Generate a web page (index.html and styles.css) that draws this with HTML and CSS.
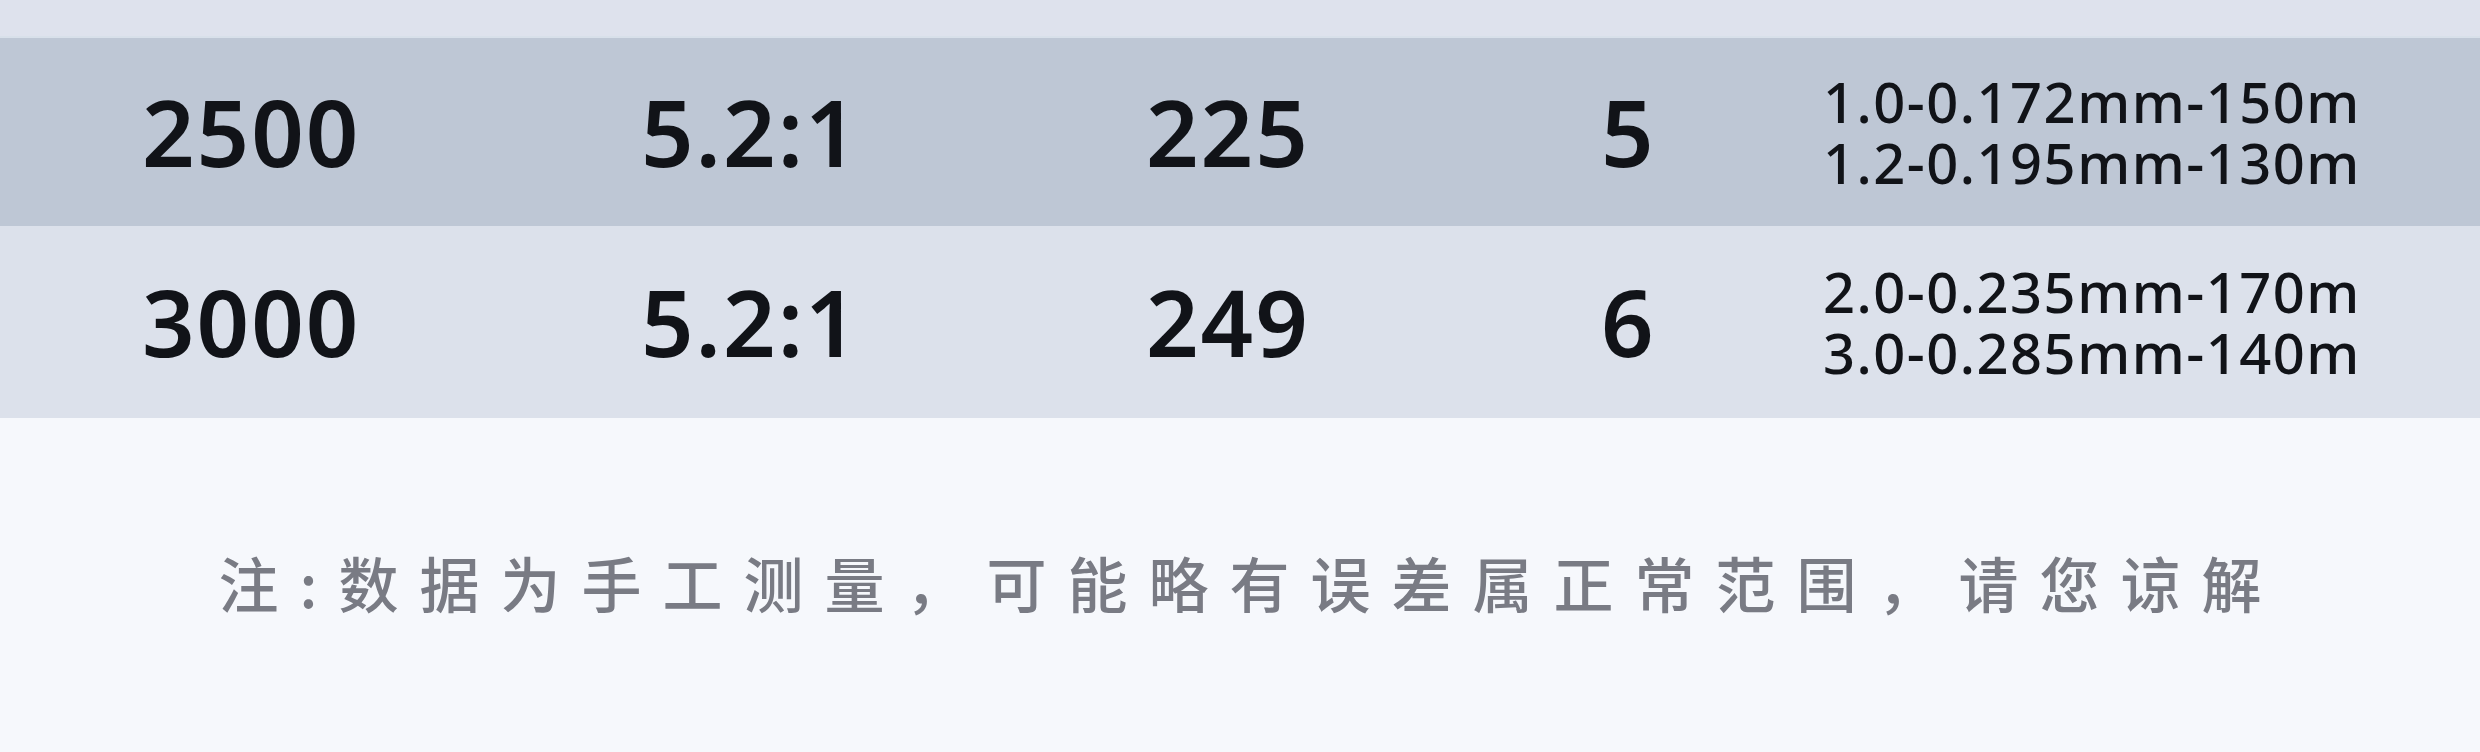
FILE: index.html
```html
<!DOCTYPE html>
<html lang="zh-CN">
<head>
<meta charset="utf-8">
<title>规格参数</title>
<link rel="stylesheet" href="styles.css">
</head>
<body>
<div class="page">
  <div class="strip"></div>
  <div class="row row-dark">
    <div class="cell">2500</div>
    <div class="cell">5.2:1</div>
    <div class="cell">225</div>
    <div class="cell">5</div>
    <div class="cell spec">
      <span>1.0-0.172mm-150m</span>
      <span>1.2-0.195mm-130m</span>
    </div>
  </div>
  <div class="row row-light">
    <div class="cell">3000</div>
    <div class="cell">5.2:1</div>
    <div class="cell">249</div>
    <div class="cell">6</div>
    <div class="cell spec">
      <span>2.0-0.235mm-170m</span>
      <span>3.0-0.285mm-140m</span>
    </div>
  </div>
  <p class="note">注:数据为手工测量，可能略有误差属正常范围，请您谅解</p>
</div>
</body>
</html>
```

FILE: styles.css
```css
* { box-sizing: border-box; }
html, body {
  margin: 0;
  padding: 0;
  background: #f6f8fc;
}
.page {
  width: 2480px;
  height: 752px;
  overflow: hidden;
  background: #f6f8fc;
  font-family: "Noto Sans", "Noto Sans CJK SC", sans-serif;
}
.strip {
  height: 38px;
  background: #dee2ed;
  border-bottom: 2px solid #d8e0ea;
}
.row {
  display: grid;
  grid-template-columns: 499px 505px 455px 222px 1fr;
  align-items: center;
  padding-left: 142px;
  color: #111318;
}
.row-dark {
  height: 188px;
  background: #bec7d5;
}
.row-light {
  height: 192px;
  background: #dce1eb;
}
.cell {
  font-size: 92px;
  font-weight: 600;
  letter-spacing: 2px;
  line-height: 1;
}
.spec {
  display: flex;
  flex-direction: column;
  font-size: 56px;
  font-weight: 500;
  letter-spacing: 1.5px;
  line-height: 61px;
}
.note {
  margin: 0;
  padding-top: 124px;
  text-align: center;
  font-family: "Noto Sans CJK SC", sans-serif;
  font-size: 60px;
  font-weight: 500;
  line-height: 80px;
  letter-spacing: 21px;
  color: #797b84;
  padding-left: 21px;
}
```
